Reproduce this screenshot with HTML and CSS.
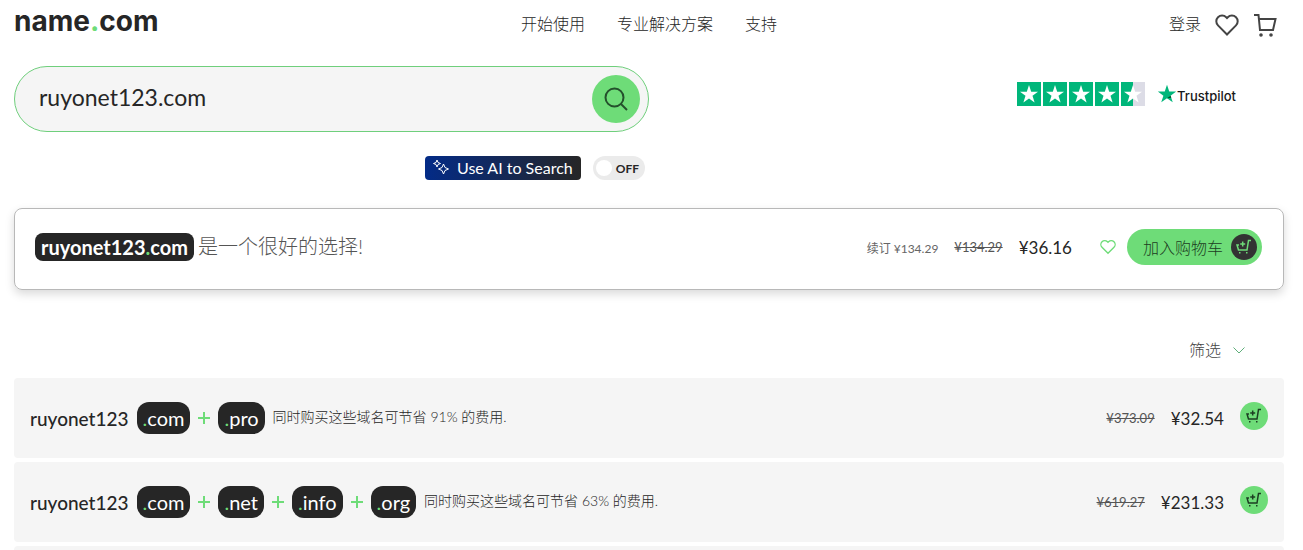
FILE: index.html
```html
<!DOCTYPE html>
<html lang="zh-CN">
<head>
    <meta charset="UTF-8">
    <title>name.com</title>
    <link rel="stylesheet" href="styles.css">
</head>
<body>
    <svg class="icon-defs" aria-hidden="true">
        <symbol id="icon-heart" viewBox="0 0 24 24">
            <path d="M12 21.5 3 12.4A5.8 5.8 0 0 1 3 4.2a5.8 5.8 0 0 1 8.200 0L12 5l.8-.8a5.8 5.8 0 0 1 8.200 0 5.800 5.800 0 0 1 0 8.200z" />
        </symbol>
        <symbol id="icon-cart-plus" viewBox="0 0 16 16">
            <path d="M3 6H1l1.500 5H11l1.500-9.500H15M6.700 2.500v5M4.200 5h5" />
            <path d="M3 13.800h1.500M10 13.800h1.500" />
        </symbol>
        <symbol id="icon-star" viewBox="0 0 24 24">
            <path d="M12 3l2.200 6.700H21l-5.500 4.100L17.600 20.500 12 16.400 6.400 20.500l2.100-6.700L3 9.700h6.800z" />
        </symbol>
    </svg>

    <header class="header">
        <a class="logo" href="#">name<span class="dot">.</span>com</a>
        <nav class="nav">
            <a href="#">开始使用</a>
            <a href="#">专业解决方案</a>
            <a href="#">支持</a>
        </nav>
        <div class="account">
            <a class="login" href="#">登录</a>
            <a class="account-icon" href="#" aria-label="收藏"><svg><use href="#icon-heart" /></svg></a>
            <a class="account-icon" href="#" aria-label="购物车">
                <svg viewBox="0 0 24 24">
                    <path d="M1 2h4.500l1.500 15h13l2.500-11H6" />
                    <circle class="wheel" cx="8" cy="22" r=".8" />
                    <circle class="wheel" cx="18" cy="22" r=".8" />
                </svg>
            </a>
        </div>
    </header>

    <main>
        <div class="search-area">
            <form class="search">
                <input class="search-input" type="text" value="ruyonet123.com" aria-label="搜索域名">
                <button class="search-btn" type="button" aria-label="搜索">
                    <svg viewBox="0 0 24 24"><circle cx="10.500" cy="10.500" r="9" /><path d="M17 17l6 6" /></svg>
                </button>
            </form>
            <a class="trustpilot" href="#">
                <span class="stars">
                    <svg><use href="#icon-star" /></svg>
                    <svg><use href="#icon-star" /></svg>
                    <svg><use href="#icon-star" /></svg>
                    <svg><use href="#icon-star" /></svg>
                    <svg class="half"><use href="#icon-star" /></svg>
                </span>
                <span class="trust-name">
                    <svg viewBox="0 0 24 24">
                        <path d="M12 1l2.700 8H23l-6.700 5 2.600 8L12 17.200 5.100 22l2.600-8L1 9h8.300z" />
                        <path class="trust-shade" d="M16.300 14l.8 2.500L12 17.200z" />
                    </svg>
                    <span>Trustpilot</span>
                </span>
            </a>
            <div class="ai">
                <span class="ai-label">
                    <svg viewBox="0 0 16 16">
                        <path d="M10.500 5l1.500 3.500 3.500 1.500-3.500 1.500-1.500 3.500L9 11.500 5.500 10 9 8.500zM4 1l1 2.500L7.500 4.500 5 5.500 4 8 3 5.500.5 4.500 3 3.500z" />
                    </svg>
                    Use AI to Search
                </span>
                <label class="toggle"><input type="checkbox" aria-label="Use AI to Search">OFF</label>
            </div>
        </div>

        <section class="result">
            <strong class="result-domain">ruyonet123<span class="dot">.</span>com</strong>
            <span class="result-text">是一个很好的选择!</span>
            <span class="renew">续订 ¥134.29</span>
            <s class="old-price">¥134.29</s>
            <span class="price">¥36.16</span>
            <button class="fav" type="button" aria-label="收藏"><svg><use href="#icon-heart" /></svg></button>
            <button class="add-cart" type="button">
                加入购物车
                <span class="add-cart-icon"><svg><use href="#icon-cart-plus" /></svg></span>
            </button>
        </section>

        <div class="filter">
            <button type="button">
                筛选
                <svg viewBox="0 0 12 12"><path d="M.5 3.500 6 9l5.500-5.500" /></svg>
            </button>
        </div>

        <ul class="bundles">
            <li>
                <span class="name">ruyonet123</span>
                <span class="tlds">
                    <span class="tld"><span class="dot">.</span>com</span>
                    <span class="plus"></span>
                    <span class="tld"><span class="dot">.</span>pro</span>
                </span>
                <span class="save">同时购买这些域名可节省 91% 的费用.</span>
                <s class="old-price">¥373.09</s>
                <span class="price">¥32.54</span>
                <button class="cart-btn" type="button" aria-label="加入购物车"><svg><use href="#icon-cart-plus" /></svg></button>
            </li>
            <li>
                <span class="name">ruyonet123</span>
                <span class="tlds">
                    <span class="tld"><span class="dot">.</span>com</span>
                    <span class="plus"></span>
                    <span class="tld"><span class="dot">.</span>net</span>
                    <span class="plus"></span>
                    <span class="tld"><span class="dot">.</span>info</span>
                    <span class="plus"></span>
                    <span class="tld"><span class="dot">.</span>org</span>
                </span>
                <span class="save">同时购买这些域名可节省 63% 的费用.</span>
                <s class="old-price">¥619.27</s>
                <span class="price">¥231.33</span>
                <button class="cart-btn" type="button" aria-label="加入购物车"><svg><use href="#icon-cart-plus" /></svg></button>
            </li>
            <li></li>
        </ul>
    </main>
</body>
</html>
```
FILE: styles.css
```css
* {
  margin: 0;
  padding: 0;
  box-sizing: border-box;
}
html, body {
  height: 100%;
}
body {
  display: flex;
  flex-direction: column;
  padding: 0 19px 0 14px;
  background: #fff;
  color: #262626;
  font-family: Lato, "Noto Sans CJK SC", sans-serif;
  font-weight: 400;
  font-size: 16px;
}
main {
  flex: 1;
  min-height: 0;
  overflow: hidden;
  margin: 0 -19px 0 -14px;
  padding: 0 19px 0 14px;
}
a {
  color: inherit;
  text-decoration: none;
}
button {
  border: none;
  background: none;
  color: inherit;
  font: inherit;
  cursor: pointer;
}
ul {
  list-style: none;
}
svg {
  display: block;
  fill: none;
  stroke: currentColor;
  stroke-width: 2;
}
.icon-defs {
  display: none;
}
.dot {
  color: #6edc78;
}

/* header */
.header {
  display: grid;
  grid-template-columns: 1fr auto 1fr;
  align-items: center;
  height: 50px;
}
.logo {
  padding-bottom: 8px;
  font-family: Inter, sans-serif;
  font-size: 28px;
  font-weight: 700;
  line-height: 34px;
}
.nav {
  display: flex;
  gap: 32px;
  padding-bottom: 4px;
  font-weight: 300;
}
.account {
  display: flex;
  justify-content: flex-end;
  align-items: center;
  gap: 14px;
  padding-right: 7px;
}
.login {
  padding-bottom: 4px;
  font-weight: 300;
}
.account-icon svg {
  width: 24px;
  height: 24px;
  color: #444;
}
.wheel {
  fill: currentColor;
}

/* search */
.search-area {
  display: grid;
  grid-template-columns: 1fr 1fr;
  row-gap: 24px;
  padding: 16px 0 28px;
}
.search {
  display: flex;
  align-items: center;
  height: 66px;
  padding: 0 8px 0 24px;
  border: 1px solid #6fcf7c;
  border-radius: 33px;
  background: #f5f5f5;
}
.search-input {
  flex: 1;
  padding-bottom: 4px;
  border: none;
  outline: none;
  background: none;
  color: #262626;
  font: inherit;
  font-size: 23px;
}
.search-btn {
  display: grid;
  place-items: center;
  width: 48px;
  height: 48px;
  border-radius: 50%;
  background: #6edc78;
  color: #24502c;
}
.search-btn svg {
  width: 24px;
  height: 24px;
}
.trustpilot {
  display: flex;
  justify-content: flex-end;
  align-items: center;
  gap: 12px;
  padding: 0 48px 10px 0;
}
.stars {
  display: flex;
  gap: 2px;
}
.stars svg {
  width: 24px;
  height: 24px;
  background: #00b67a;
  fill: #fff;
  stroke: none;
}
.stars .half {
  background: linear-gradient(90deg, #00b67a 50%, #dcdce6 50%);
}
.trust-name {
  display: flex;
  align-items: center;
  color: #191919;
  font-family: Inter, sans-serif;
  font-size: 13px;
  font-weight: 500;
}
.trust-name span {
  padding-top: 4px;
}
.trust-name svg {
  width: 20px;
  height: 20px;
  fill: #00b67a;
  stroke: none;
}
.trust-name .trust-shade {
  fill: #005128;
}
.ai {
  display: flex;
  justify-content: flex-end;
  align-items: center;
  gap: 12px;
  padding-right: 4px;
}
.ai-label {
  display: flex;
  align-items: center;
  gap: 8px;
  height: 24px;
  padding: 0 8px 2px;
  border-radius: 4px;
  background: linear-gradient(90deg, #032b87, #262626);
  color: #fff;
}
.ai-label svg {
  width: 16px;
  height: 16px;
  stroke-width: 1;
}
.toggle {
  display: flex;
  align-items: center;
  gap: 4px;
  height: 24px;
  padding: 0 6px 0 3px;
  border-radius: 12px;
  background: #ebebeb;
  font-size: 12px;
  font-weight: 700;
}
.toggle input {
  appearance: none;
  width: 16px;
  height: 16px;
  border-radius: 50%;
  background: #fff;
}

/* main result */
.result {
  display: flex;
  align-items: center;
  height: 82px;
  padding: 0 21px 4px 20px;
  border: 1px solid #b8b8b8;
  border-radius: 8px;
  box-shadow: 0 4px 10px rgba(0, 0, 0, .15);
}
.result-domain {
  padding: 0 6px;
  border-radius: 8px;
  background: #262626;
  color: #fff;
  font-size: 20px;
  line-height: 28px;
}
.result-text {
  flex: 1;
  padding: 0 0 4px 4px;
  color: #555;
  font-size: 20px;
  font-weight: 300;
}
.renew {
  color: #666;
  font-size: 12px;
}
.old-price {
  margin-left: 16px;
  color: #555;
  font-size: 13px;
}
.price {
  margin-left: 16px;
  font-size: 17px;
}
.fav {
  margin: 0 11px 0 28px;
  color: #6edc78;
}
.fav svg {
  width: 16px;
  height: 16px;
}
.add-cart {
  display: flex;
  align-items: center;
  gap: 8px;
  height: 36px;
  padding: 0 5px 0 16px;
  border-radius: 18px;
  background: #6edc78;
  color: #1c3d22;
  font-weight: 300;
}
.add-cart-icon {
  display: grid;
  place-items: center;
  width: 26px;
  height: 26px;
  border-radius: 50%;
  background: #333;
  color: #6edc78;
}
.add-cart-icon svg,
.cart-btn svg {
  width: 16px;
  height: 16px;
  stroke-width: 1.5;
}

/* filter */
.filter {
  display: flex;
  justify-content: flex-end;
  padding: 48px 39px 16px 0;
}
.filter button {
  display: flex;
  align-items: center;
  gap: 12px;
  color: #444;
  font-weight: 300;
  line-height: 24px;
}
.filter svg {
  width: 12px;
  height: 12px;
  color: #5fae7a;
  stroke-width: 1;
}

/* bundles */
.bundles {
  display: grid;
  gap: 4px;
}
.bundles li {
  display: flex;
  align-items: center;
  height: 80px;
  padding: 0 16px;
  border-radius: 4px;
  background: #f5f5f5;
}
.name {
  font-size: 19px;
  font-weight: 500;
}
.tlds {
  display: flex;
  align-items: center;
  gap: 8px;
  padding: 0 8px;
}
.tld {
  padding: 0 6px;
  border-radius: 12px;
  background: #262626;
  color: #fff;
  font-size: 20px;
  line-height: 32px;
}
.plus {
  width: 12px;
  height: 12px;
  background:
    linear-gradient(#6edc78, #6edc78) center / 12px 2px no-repeat,
    linear-gradient(#6edc78, #6edc78) center / 2px 12px no-repeat;
}
.save {
  flex: 1;
  padding-bottom: 4px;
  color: #262626;
  font-size: 14px;
  font-weight: 300;
}
.cart-btn {
  display: grid;
  place-items: center;
  width: 28px;
  height: 28px;
  margin: 0 0 4px 16px;
  border-radius: 50%;
  background: #6edc78;
  color: #1c3d22;
}
```
